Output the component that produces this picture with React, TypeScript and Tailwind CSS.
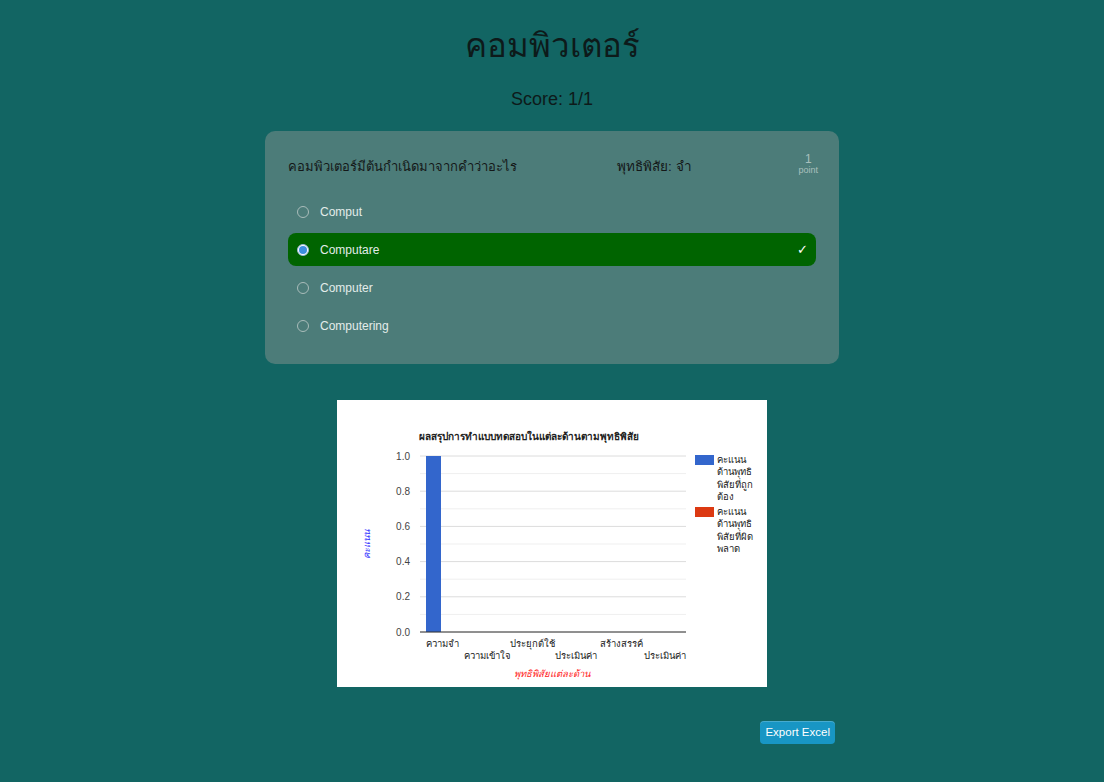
import React from "react";

const options = [
  { label: "Comput", selected: false, correct: false },
  { label: "Computare", selected: true, correct: true },
  { label: "Computer", selected: false, correct: false },
  { label: "Computering", selected: false, correct: false },
];

function Radio({ checked }: { checked: boolean }) {
  return checked ? (
    <span className="w-[12px] h-[12px] rounded-full border border-[#9ab7d6] bg-white flex items-center justify-center shrink-0">
      <span className="w-[8px] h-[8px] rounded-full bg-[#3d8fe0]" />
    </span>
  ) : (
    <span className="w-[12px] h-[12px] rounded-full border border-[#a9bcba] shrink-0" />
  );
}

function Chart() {
  const top = 456;
  const bottom = 632;
  const left = 420;
  const right = 686;
  const ox = 337;
  const oy = 400;
  const yFor = (v: number) => bottom - (bottom - top) * v;
  const grid = [] as React.ReactNode[];
  for (let i = 0; i <= 10; i++) {
    const v = i / 10;
    const y = yFor(v) - oy;
    grid.push(
      <line
        key={i}
        x1={left - ox}
        x2={right - ox}
        y1={y}
        y2={y}
        stroke={i % 2 === 0 ? "#dcdcdc" : "#efefef"}
        strokeWidth={1}
      />
    );
  }
  const labels = ["1.0", "0.8", "0.6", "0.4", "0.2", "0.0"];
  const xLabels = [
    { t: "ความจำ", x: 426, y: 647 },
    { t: "ความเข้าใจ", x: 464, y: 659 },
    { t: "ประยุกต์ใช้", x: 510, y: 647 },
    { t: "ประเมินค่า", x: 555, y: 659 },
    { t: "สร้างสรรค์", x: 600, y: 647 },
    { t: "ประเมินค่า", x: 644, y: 659 },
  ];
  const ff = "'Liberation Sans', Arial, sans-serif";
  return (
    <svg width={430} height={287} viewBox="0 0 430 287" className="block bg-white">
      <rect x={0} y={0} width={430} height={287} fill="#ffffff" />
      <text x={419 - ox} y={440 - oy} fontSize={10} fontWeight={700} fill="#222" fontFamily={ff}>
        ผลสรุปการทำแบบทดสอบในแต่ละด้านตามพุทธิพิสัย
      </text>
      {grid}
      {labels.map((l, i) => (
        <text
          key={l}
          x={410 - ox}
          y={yFor(1 - i * 0.2) - oy + 3.5}
          fontSize={10}
          textAnchor="end"
          fill="#444"
          fontFamily={ff}
        >
          {l}
        </text>
      ))}
      <rect x={426 - ox} y={top - oy} width={15} height={bottom - top} fill="#3366cc" />
      <line x1={left - ox} x2={right - ox} y1={bottom - oy} y2={bottom - oy} stroke="#333" strokeWidth={1} />
      {xLabels.map((l, i) => (
        <text key={i} x={l.x - ox} y={l.y - oy} fontSize={9.5} fill="#222" fontFamily={ff}>
          {l.t}
        </text>
      ))}
      <text
        x={552 - ox}
        y={677 - oy}
        fontSize={9.5}
        fontStyle="italic"
        textAnchor="middle"
        fill="#ff2222"
        fontFamily={ff}
      >
        พุทธิพิสัยแต่ละด้าน
      </text>
      <text
        x={0}
        y={0}
        fontSize={9.5}
        fontStyle="italic"
        textAnchor="middle"
        fill="#3333ff"
        fontFamily={ff}
        transform={`translate(${370 - ox} ${544 - oy}) rotate(-90)`}
      >
        คะแนน
      </text>
      <rect x={695 - ox} y={455 - oy} width={19} height={10} fill="#3366cc" />
      {["คะแนน", "ด้านพุทธิ", "พิสัยที่ถูก", "ต้อง"].map((t, i) => (
        <text key={t} x={717 - ox} y={463 - oy + i * 12.3} fontSize={9.5} fill="#222" fontFamily={ff}>
          {t}
        </text>
      ))}
      <rect x={695 - ox} y={507 - oy} width={19} height={10} fill="#dc3912" />
      {["คะแนน", "ด้านพุทธิ", "พิสัยที่ผิด", "พลาด"].map((t, i) => (
        <text key={t} x={717 - ox} y={515 - oy + i * 12.3} fontSize={9.5} fill="#222" fontFamily={ff}>
          {t}
        </text>
      ))}
    </svg>
  );
}

export default function App() {
  return (
    <div
      className="w-full min-h-[782px] bg-[#126563] flex flex-col items-center"
      style={{ fontFamily: "'Liberation Sans', Arial, sans-serif" }}
    >
      <h1 className="mt-[25px] text-[33px] leading-[42px] text-[#0d1a1a] font-medium">คอมพิวเตอร์</h1>
      <div className="mt-[21px] text-[18px] leading-[22px] text-[#0d1a1a]">Score: 1/1</div>

      <div className="mt-[21px] w-[574px] rounded-[10px] bg-[#4c7c79] px-[23px] pt-[22px] pb-[22px]">
        <div className="flex items-start">
          <div className="w-[329px] pt-[5px] text-[13px] leading-[18px] text-[#141818]">
            คอมพิวเตอร์มีต้นกำเนิดมาจากคำว่าอะไร
          </div>
          <div className="flex-1 pt-[5px] text-[13.5px] leading-[18px] text-[#141818]">พุทธิพิสัย: จำ</div>
          <div className="flex flex-col items-center text-[#a9c0bd] mr-[-2px]">
            <span className="text-[12px] leading-[12px]">1</span>
            <span className="text-[9px] leading-[11px]">point</span>
          </div>
        </div>
        <div className="mt-[19px] flex flex-col gap-[5px]">
          {options.map((o) => (
            <div
              key={o.label}
              className={`h-[33px] rounded-[8px] flex items-center pl-[9px] pr-[8px] ${
                o.correct ? "bg-[#006400]" : ""
              }`}
            >
              <Radio checked={o.selected} />
              <span className="ml-[11px] text-[12px] text-[#e3ecea] flex-1">{o.label}</span>
              {o.correct && <span className="text-[13px] text-white">✓</span>}
            </div>
          ))}
        </div>
      </div>

      <div className="mt-[36px]">
        <Chart />
      </div>

      <div className="w-[574px] flex justify-end mt-[34px] pr-[4px]">
        <button className="h-[23px] px-[5px] rounded-[4px] bg-[#1896c4] text-white text-[11.5px] leading-[23px] shadow-[inset_0_1px_0_rgba(255,255,255,0.2)]">
          Export Excel
        </button>
      </div>
    </div>
  );
}
